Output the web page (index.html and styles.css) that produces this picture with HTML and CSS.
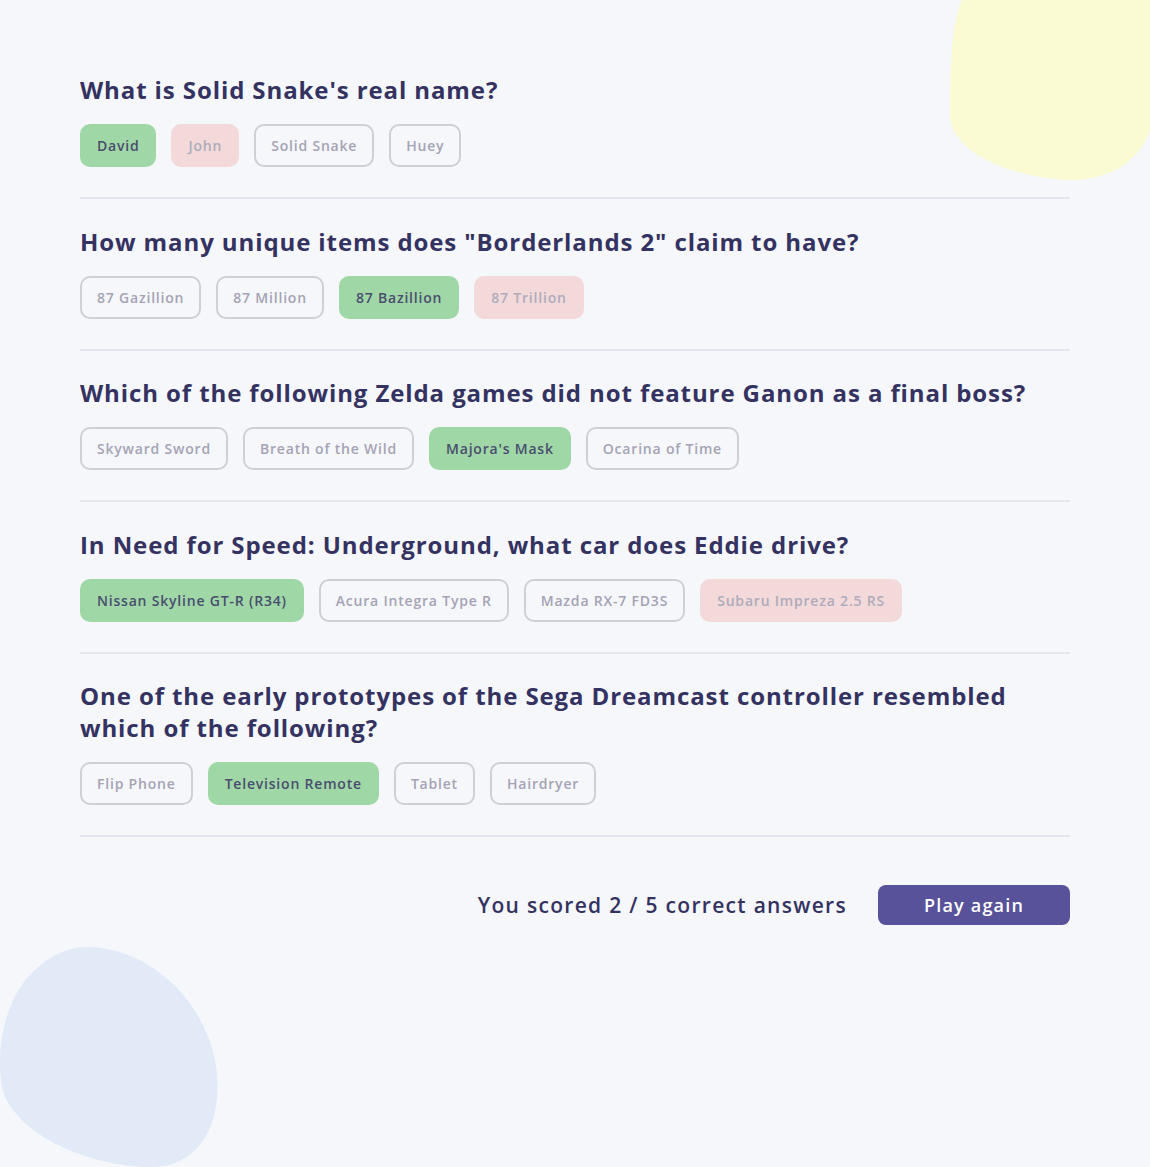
FILE: index.html
```html
<!DOCTYPE html>
<html lang="en">
<head>
<meta charset="utf-8">
<title>Quiz results</title>
<link rel="stylesheet" href="styles.css">
</head>
<body>
<svg class="blob blob-yellow" width="200" height="182" viewBox="950 0 200 182" aria-hidden="true">
  <path d="M962 0 C952 22 950 60 950 118 C953 152 1010 178 1070 180 C1110 181 1140 160 1150 130 L1150 0 Z" fill="#fafbd3"/>
</svg>
<svg class="blob blob-blue" width="222" height="222" viewBox="0 945 222 222" aria-hidden="true">
  <path d="M88 947 C140 947 200 990 215 1060 C225 1115 205 1167 150 1167 C100 1167 22 1142 3 1092 C-4 1060 0 1010 28 977 C45 958 65 947 88 947 Z" fill="#e1eaf6"/>
</svg>
<main class="quiz">
  <section class="question">
    <h2 class="q-title">What is Solid Snake's real name?</h2>
    <div class="answers">
      <span class="ans correct">David</span>
      <span class="ans wrong">John</span>
      <span class="ans">Solid Snake</span>
      <span class="ans">Huey</span>
    </div>
  </section>
  <section class="question">
    <h2 class="q-title">How many unique items does "Borderlands 2" claim to have?</h2>
    <div class="answers">
      <span class="ans">87 Gazillion</span>
      <span class="ans">87 Million</span>
      <span class="ans correct">87 Bazillion</span>
      <span class="ans wrong">87 Trillion</span>
    </div>
  </section>
  <section class="question">
    <h2 class="q-title">Which of the following Zelda games did not feature Ganon as a final boss?</h2>
    <div class="answers">
      <span class="ans">Skyward Sword</span>
      <span class="ans">Breath of the Wild</span>
      <span class="ans correct">Majora's Mask</span>
      <span class="ans">Ocarina of Time</span>
    </div>
  </section>
  <section class="question">
    <h2 class="q-title">In Need for Speed: Underground, what car does Eddie drive?</h2>
    <div class="answers">
      <span class="ans correct">Nissan Skyline GT-R (R34)</span>
      <span class="ans">Acura Integra Type R</span>
      <span class="ans">Mazda RX-7 FD3S</span>
      <span class="ans wrong">Subaru Impreza 2.5 RS</span>
    </div>
  </section>
  <section class="question">
    <h2 class="q-title">One of the early prototypes of the Sega Dreamcast controller resembled which of the following?</h2>
    <div class="answers">
      <span class="ans">Flip Phone</span>
      <span class="ans correct">Television Remote</span>
      <span class="ans">Tablet</span>
      <span class="ans">Hairdryer</span>
    </div>
  </section>
  <footer class="result">
    <p class="score">You scored 2 / 5 correct answers</p>
    <button class="play" type="button">Play again</button>
  </footer>
</main>
</body>
</html>
```
FILE: styles.css
```css
* { box-sizing: border-box; }
html, body { margin: 0; padding: 0; }
body {
  background: #f5f7fb;
  font-family: "Open Sans", "Liberation Sans", sans-serif;
  color: #343261;
  min-height: 1167px;
  position: relative;
  overflow: hidden;
}
.blob { position: absolute; z-index: 0; }
.blob-yellow { top: 0; right: 0; }
.blob-blue { left: 0; top: 945px; }
.quiz {
  position: relative;
  z-index: 1;
  width: 990px;
  margin-left: 80px;
  padding-top: 74px;
}
.question {
  padding-bottom: 30px;
  border-bottom: 2px solid #e5e5f0;
  margin-bottom: 26.5px;
}
.q-title {
  margin: 0;
  font-size: 24px;
  line-height: 32px;
  font-weight: 700;
  color: #343261;
  letter-spacing: 0.9px;
}
.answers {
  display: flex;
  gap: 15px;
  margin-top: 18px;
}
.ans {
  display: inline-flex;
  align-items: center;
  height: 43px;
  padding: 0 15px;
  border: 2px solid #cfcfd6;
  border-radius: 10px;
  font-size: 14px;
  font-weight: 600;
  color: #a5a3b5;
  letter-spacing: 0.8px;
}
.ans.correct {
  background: #9fd8a6;
  border-color: #9fd8a6;
  color: #4a4d6e;
}
.ans.wrong {
  background: #f3d9d9;
  border-color: #f3d9d9;
  color: #aeacbc;
}
.result {
  display: flex;
  justify-content: flex-end;
  align-items: center;
  gap: 31px;
  margin-top: 48px;
}
.score {
  margin: 0;
  font-size: 21px;
  font-weight: 600;
  color: #343261;
  letter-spacing: 1.3px;
}
.play {
  width: 192px;
  height: 40px;
  border: none;
  border-radius: 8px;
  background: #575299;
  color: #ffffff;
  font-family: inherit;
  font-size: 18px;
  font-weight: 600;
  letter-spacing: 1.2px;
}
```
